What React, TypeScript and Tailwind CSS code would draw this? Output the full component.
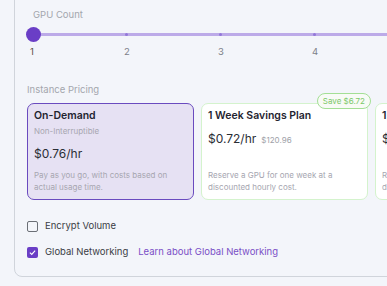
const font = { fontFamily: "Inter, 'Noto Sans', sans-serif" };

const ticks = [1, 2, 3, 4, 5];

const Slider = () => (
  <div className="relative h-[40px]">
    <div className="absolute left-[6px] right-0 top-[12px] h-[3px] rounded-full bg-[#bcaae8]" />
    {ticks.slice(1).map((t, i) => (
      <div
        key={t}
        className="absolute top-[12px] h-[3px] w-[3px] rounded-full bg-[#9378d8]"
        style={{ left: 98 + i * 94 }}
      />
    ))}
    <div className="absolute left-[-1px] top-[6px] h-[15px] w-[15px] rounded-full bg-[#6a3ec6]" />
    {ticks.map((t, i) => (
      <span
        key={t}
        className={`absolute top-[25px] text-[9.5px] leading-[12px] ${i === 0 ? "text-[#5b5146]" : "text-[#7c8088]"}`}
        style={{ left: 3 + i * 94 }}
      >
        {t}
      </span>
    ))}
  </div>
);

const Checkbox = ({ checked }: { checked?: boolean }) =>
  checked ? (
    <div className="flex h-[11px] w-[11px] shrink-0 items-center justify-center rounded-[2px] bg-[#6a3ec6]">
      <svg viewBox="0 0 12 12" className="h-[9px] w-[9px]" fill="none" stroke="white" strokeWidth="1.5">
        <path d="M2.5 6.2 5 8.5 9.5 3.5" />
      </svg>
    </div>
  ) : (
    <div className="h-[11px] w-[11px] shrink-0 rounded-[2px] border-[1.5px] border-[#6b6f76]" />
  );

export default function App() {
  return (
    <div className="h-[286px] w-[387px] overflow-hidden bg-[#f3f5fa]" style={font}>
      <div className="ml-[14px] mt-[-20px] w-[440px] rounded-[8px] border border-[#d0d4db] pb-[18px] pl-[12px] pt-[28px]">
        <div className="pl-[6px] text-[9.5px] leading-[12px] text-[#a3a6ad]">GPU Count</div>
        <Slider />

        <div className="mt-[23px] text-[9.5px] leading-[12px] text-[#a3a6ad]">Instance Pricing</div>
        <div className="mt-[7px] flex gap-[7px]">
          <div className="flex h-[97px] w-[167px] shrink-0 flex-col rounded-[7px] border border-[#6a4bbf] bg-[#e6e1f3] pl-[6px] pr-[10px] pt-[5px]">
            <div className="text-[10.5px] font-semibold leading-[14px] text-[#1f2430]">On-Demand</div>
            <div className="mt-[3px] text-[8px] leading-[11px] text-[#a6a6b0]">Non-Interruptible</div>
            <div className="mt-[9px] text-[12px] leading-[16px] text-[#2a2d35]">$0.76/hr</div>
            <div className="mt-[8px] text-[8px] leading-[11.5px] text-[#a6a6b0]">
              Pay as you go, with costs based on actual usage time.
            </div>
          </div>

          <div className="relative flex h-[97px] w-[167px] shrink-0 flex-col rounded-[7px] border border-[#d4f3cd] bg-white pl-[6px] pr-[10px] pt-[5px]">
            <div className="absolute right-[-4px] top-[-11px] rounded-full border border-[#a3df95] bg-[#f8fbf6] px-[5px] text-[8px] leading-[14px] text-[#7cc869]">
              Save $6.72
            </div>
            <div className="text-[10.5px] font-semibold leading-[14px] text-[#1f2430]">1 Week Savings Plan</div>
            <div className="mt-[8px] flex items-baseline gap-[5px]">
              <span className="text-[12px] leading-[16px] text-[#2a2d35]">$0.72/hr</span>
              <span className="text-[8px] text-[#9ea1a8]">$120.96</span>
            </div>
            <div className="mt-[23px] text-[8px] leading-[11.5px] text-[#a6a6b0]">
              Reserve a GPU for one week at a discounted hourly cost.
            </div>
          </div>

          <div className="flex h-[97px] w-[167px] shrink-0 flex-col rounded-[7px] border border-[#d4f3cd] bg-white pl-[6px] pr-[10px] pt-[5px]">
            <div className="text-[10.5px] font-semibold leading-[14px] text-[#1f2430]">1 Month Savings Plan</div>
            <div className="mt-[8px] text-[12px] leading-[16px] text-[#2a2d35]">$0.69/hr</div>
            <div className="mt-[23px] text-[8px] leading-[11.5px] text-[#a6a6b0]">
              Reserve a GPU for one month at a discounted hourly cost.
            </div>
          </div>
        </div>

        <div className="mt-[20px] flex flex-col gap-[14px] text-[9.5px] leading-[12px] text-[#3a3d45]">
          <label className="flex items-center gap-[7px]">
            <Checkbox />
            <span>Encrypt Volume</span>
          </label>
          <label className="flex items-center gap-[7px]">
            <Checkbox checked />
            <span>Global Networking</span>
            <span className="ml-[3px] text-[#7a4fc6]">Learn about Global Networking</span>
          </label>
        </div>
      </div>
    </div>
  );
}
